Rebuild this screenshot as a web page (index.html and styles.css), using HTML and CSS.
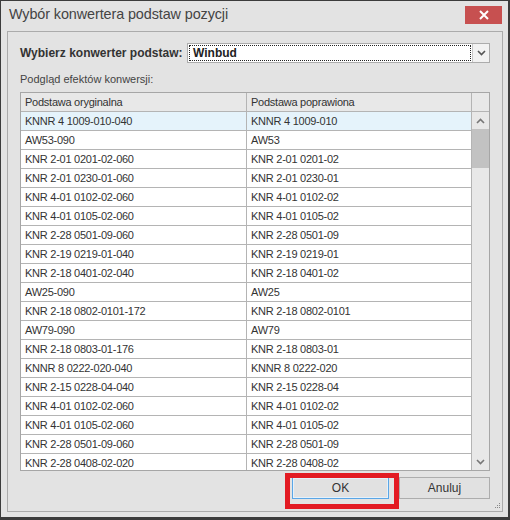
FILE: index.html
```html
<!DOCTYPE html>
<html>
<head>
<meta charset="utf-8">
<link rel="stylesheet" href="styles.css">
</head>
<body>
<div class="window">
  <div class="titlebar">
    <span class="title">Wybór konwertera podstaw pozycji</span>
    <span class="close"><svg width="12" height="10" viewBox="0 0 12 10"><path d="M2 1 L10 9 M10 1 L2 9" stroke="#fff" stroke-width="2"/></svg></span>
  </div>
  <div class="panel">
    <div class="pick">
      <span class="pick-label">Wybierz konwerter podstaw:</span>
      <div class="combo">
        <div class="combo-text"><span>Winbud</span></div>
        <div class="combo-btn"><svg width="9" height="6" viewBox="0 0 9 6"><path d="M1 1 L4.5 4.5 L8 1" fill="none" stroke="#555" stroke-width="1.6"/></svg></div>
      </div>
    </div>
    <div class="caption">Podgląd efektów konwersji:</div>
    <div class="grid">
      <div class="cols">
        <div class="row head"><div class="cell">Podstawa oryginalna</div><div class="cell">Podstawa poprawiona</div></div>
        <div class="row sel"><div class="cell">KNNR 4 1009-010-040</div><div class="cell">KNNR 4 1009-010</div></div>
        <div class="row"><div class="cell">AW53-090</div><div class="cell">AW53</div></div>
        <div class="row"><div class="cell">KNR 2-01 0201-02-060</div><div class="cell">KNR 2-01 0201-02</div></div>
        <div class="row"><div class="cell">KNR 2-01 0230-01-060</div><div class="cell">KNR 2-01 0230-01</div></div>
        <div class="row"><div class="cell">KNR 4-01 0102-02-060</div><div class="cell">KNR 4-01 0102-02</div></div>
        <div class="row"><div class="cell">KNR 4-01 0105-02-060</div><div class="cell">KNR 4-01 0105-02</div></div>
        <div class="row"><div class="cell">KNR 2-28 0501-09-060</div><div class="cell">KNR 2-28 0501-09</div></div>
        <div class="row"><div class="cell">KNR 2-19 0219-01-040</div><div class="cell">KNR 2-19 0219-01</div></div>
        <div class="row"><div class="cell">KNR 2-18 0401-02-040</div><div class="cell">KNR 2-18 0401-02</div></div>
        <div class="row"><div class="cell">AW25-090</div><div class="cell">AW25</div></div>
        <div class="row"><div class="cell">KNR 2-18 0802-0101-172</div><div class="cell">KNR 2-18 0802-0101</div></div>
        <div class="row"><div class="cell">AW79-090</div><div class="cell">AW79</div></div>
        <div class="row"><div class="cell">KNR 2-18 0803-01-176</div><div class="cell">KNR 2-18 0803-01</div></div>
        <div class="row"><div class="cell">KNNR 8 0222-020-040</div><div class="cell">KNNR 8 0222-020</div></div>
        <div class="row"><div class="cell">KNR 2-15 0228-04-040</div><div class="cell">KNR 2-15 0228-04</div></div>
        <div class="row"><div class="cell">KNR 4-01 0102-02-060</div><div class="cell">KNR 4-01 0102-02</div></div>
        <div class="row"><div class="cell">KNR 4-01 0105-02-060</div><div class="cell">KNR 4-01 0105-02</div></div>
        <div class="row"><div class="cell">KNR 2-28 0501-09-060</div><div class="cell">KNR 2-28 0501-09</div></div>
        <div class="row"><div class="cell">KNR 2-28 0408-02-020</div><div class="cell">KNR 2-28 0408-02</div></div>
      </div>
      <div class="scrollbar">
        <div class="sb-head"></div>
        <div class="sb-arrow"><svg width="9" height="6" viewBox="0 0 9 6"><path d="M1 5 L4.5 1.5 L8 5" fill="none" stroke="#777" stroke-width="1.6"/></svg></div>
        <div class="sb-thumb"></div>
        <div class="sb-track"></div>
        <div class="sb-arrow"><svg width="9" height="6" viewBox="0 0 9 6"><path d="M1 1 L4.5 4.5 L8 1" fill="none" stroke="#777" stroke-width="1.6"/></svg></div>
      </div>
    </div>
    <div class="buttons">
      <button class="btn ok">OK</button>
      <button class="btn">Anuluj</button>
    </div>
    <svg class="grip" width="7" height="7" viewBox="0 0 7 7"><g fill="#888"><rect x="5" y="0" width="1" height="1"/><rect x="3" y="2" width="1" height="1"/><rect x="5" y="2" width="1" height="1"/><rect x="1" y="4" width="1" height="1"/><rect x="3" y="4" width="1" height="1"/><rect x="5" y="4" width="1" height="1"/></g></svg>
  </div>
  <div class="highlight"></div>
</div>
</body>
</html>
```
FILE: styles.css
```css
html, body { margin: 0; padding: 0; }
body { width: 510px; height: 520px; background: #3a3a3a; overflow: hidden; }
.window {
  position: relative;
  width: 510px; height: 520px; box-sizing: border-box;
  background: #e3e3e3;
  border-style: solid; border-color: #3c3c3c;
  border-width: 1px 2px 3px 1px;
  font-family: "Liberation Sans", Arial, sans-serif;
  color: #222;
}
.titlebar {
  height: 30px; display: flex; align-items: flex-start; justify-content: space-between;
  padding: 0 6px 0 8px;
}
.title { font-family: "Liberation Sans", sans-serif; font-size: 14.4px; letter-spacing: -0.1px; color: #444; margin-top: 5px; }
.close {
  width: 37px; height: 18px; margin-top: 5px; background: #c75050;
  display: flex; align-items: center; justify-content: center;
}
.panel {
  position: relative;
  height: 481px; box-sizing: border-box;
  margin: 0 5px 0 6px;
  border: 1px solid #ababab;
  padding: 11px 12px 0 12px;
  display: flex; flex-direction: column;
}
.pick { display: flex; align-items: center; height: 20px; }
.pick-label { font-weight: bold; font-size: 12px; color: #333; width: 167px; }
.combo { flex: 1; display: flex; height: 20px; box-sizing: border-box; border: 1px solid #acacac; background: #fff; }
.combo-text { flex: 1; padding: 1px; display: flex; }
.combo-text span {
  flex: 1; border: 1px dotted #222; font-weight: bold; font-size: 12px; padding-left: 3px; line-height: 14px; color: #222;
}
.combo-btn { width: 16px; border-left: 1px solid #c8c8c8; background: #f2f2f2; display: flex; align-items: center; justify-content: center; }
.caption { font-size: 11px; color: #444; margin-top: 8px; height: 21px; line-height: 16px; }
.grid {
  display: flex; width: 470px; height: 379px; box-sizing: border-box;
  border: 1px solid #a6a6a6; background: #fff; overflow: hidden;
  font-size: 11px; letter-spacing: -0.25px;
}
.cols { width: 451px; overflow: hidden; }
.row { display: grid; grid-template-columns: 226px 225px; height: 19px; box-sizing: border-box; }
.cell {
  box-sizing: border-box; border-right: 1px solid #b4b4b4; border-bottom: 1px solid #b4b4b4;
  padding-left: 4px; line-height: 18px; color: #333; white-space: nowrap; overflow: hidden;
}
.head .cell { background: #e8e8e8; }
.sel .cell { background: #e5f3fb; }
.scrollbar { width: 17px; display: flex; flex-direction: column; background: #e8e8e8; }
.sb-head { height: 19px; box-sizing: border-box; border-bottom: 1px solid #b4b4b4; background: #e8e8e8; }
.sb-arrow { height: 17px; display: flex; align-items: center; justify-content: center; }
.sb-thumb { height: 39px; background: #c2c2c2; }
.sb-track { flex: 1; }
.buttons { display: flex; justify-content: flex-end; gap: 10px; margin-top: 6px; width: 470px; }
.btn {
  width: 91px; height: 22px; box-sizing: border-box;
  font-family: "Liberation Sans", Arial, sans-serif; font-size: 12px; color: #333;
  background: #e1e1e1; border: 1px solid #adadad; padding: 0;
}
.btn.ok { width: 97px; border-color: #5aa6e6; box-shadow: inset 0 0 0 1px #e5f1fb; }
.grip { position: absolute; right: 1px; bottom: 1px; }
.highlight {
  position: absolute; left: 284px; top: 472px; width: 114px; height: 36px; box-sizing: border-box;
  border: 5px solid #e31b23;
}
```
